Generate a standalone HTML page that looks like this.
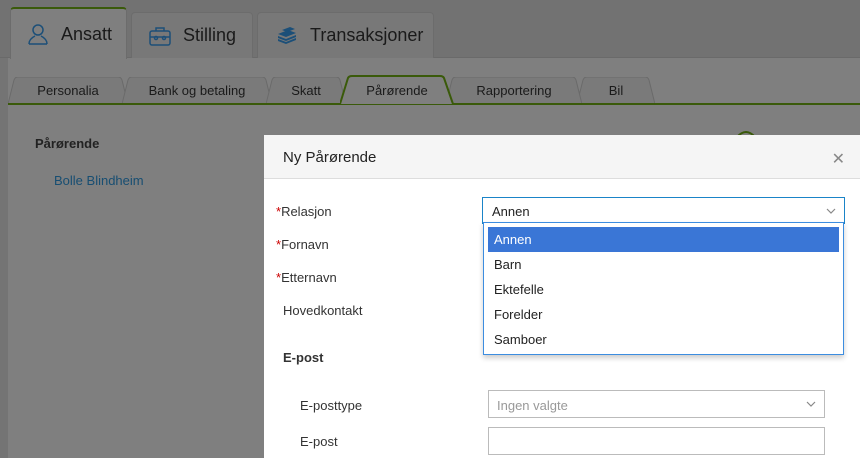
<!DOCTYPE html>
<html style="width:860px;height:458px;overflow:hidden"><head><meta charset="utf-8"><style>
*{box-sizing:border-box;margin:0;padding:0}
body{width:860px;height:458px;overflow:hidden;background:#7f7f7f;font-family:"Liberation Sans",sans-serif;position:relative;color:#222}
.top{position:absolute;left:0;top:0;width:860px;height:58px;background:#727272;border-bottom:1px solid #6a6a6a}
.lstrip{position:absolute;left:0;top:58px;width:8px;height:400px;background:#747474}
.tab{position:absolute;border:1px solid #6c6c6c;border-bottom:none;border-radius:4px 4px 0 0;background:#787878;font-size:18px;color:#1a1a1a;display:flex;align-items:center}
.tab svg{margin-right:12px}
.sub{position:absolute;top:77px;height:27px;font-size:13px;color:#1a1a1a;text-align:center;line-height:28px}
.sub svg{position:absolute;left:0;top:0}
.sub span{position:relative}
.gl{position:absolute;left:8px;top:103px;width:852px;height:2px;background:#3a5a0a}
.modal{position:absolute;left:264px;top:135px;width:600px;height:323px;background:#fff;overflow:hidden}
.mh{height:44px;background:#f5f5f5;border-bottom:1px solid #ddd;font-size:15px;padding:14px 0 0 19px;color:#222}
.lab{position:absolute;font-size:13px;color:#333}
.lab b{color:#c00;font-weight:normal}
.sel{position:absolute;border:1px solid #1a84c8;background:#fff;font-size:13px;padding:6px 9px}
.dd{position:absolute;left:219px;top:87px;width:361px;height:133px;border:1px solid #3c8de0;background:#fff;box-shadow:0 3px 5px rgba(0,0,0,.2);font-size:13px}
.dd div{height:25px;line-height:25px;padding-left:6px;margin:0 4px}
.dd .on{background:#3a76d6;color:#fff;margin-top:4px}
.inp{position:absolute;border:1px solid #bbb;background:#fff;font-size:13px;padding:7px 8px;color:#999}
.chev{position:absolute;right:8px;top:10px}
</style></head><body>
<div class="top"></div>
<div class="lstrip"></div>
<div class="tab" style="left:10px;top:7px;width:117px;height:52px;background:#7f7f7f;border-top:2px solid #3a5a0a;padding-left:16px">
<svg width="22" height="22" viewBox="0 0 22 22" fill="none" stroke="#1c4f78" stroke-width="1.5"><circle cx="11" cy="7" r="5"/><path d="M2 21c0-5 4-7 6-8M20 21c0-5-4-7-6-8M2 21h18"/></svg>Ansatt</div>
<div class="tab" style="left:131px;top:12px;width:122px;height:46px;padding-left:17px">
<svg width="22" height="20" viewBox="0 0 22 20" fill="none" stroke="#1c4f78" stroke-width="1.5"><rect x="1" y="5" width="20" height="14" rx="2"/><path d="M7 5V2h8v3M1 11h20"/><circle cx="7" cy="12" r="1.5"/><circle cx="15" cy="12" r="1.5"/></svg>Stilling</div>
<div class="tab" style="left:257px;top:12px;width:177px;height:46px;padding-left:18px">
<svg width="22" height="20" viewBox="0 0 22 20" fill="#1c4f78"><path d="M2 8l10-4 8 3-10 4z" /><path d="M2 10l8 3 10-4v2l-10 4-8-3z"/><path d="M2 13l8 3 10-4v2l-10 4-8-3z"/><path d="M6 4l8-3 5 2-8 3z"/></svg>Transaksjoner</div>

<div class="sub" style="left:8px;width:120px"><svg width="120" height="27"><path d="M0 27L6 3Q7 0 10 0H110Q113 0 114 3L120 27" fill="#7a7a7a" stroke="#6a6a6a"/></svg><span>Personalia</span></div>
<div class="sub" style="left:122px;width:150px"><svg width="150" height="27"><path d="M0 27L6 3Q7 0 10 0H140Q143 0 144 3L150 27" fill="#7a7a7a" stroke="#6a6a6a"/></svg><span>Bank og betaling</span></div>
<div class="sub" style="left:266px;width:80px"><svg width="80" height="27"><path d="M0 27L6 3Q7 0 10 0H70Q73 0 74 3L80 27" fill="#7a7a7a" stroke="#6a6a6a"/></svg><span>Skatt</span></div>
<div class="sub" style="left:577px;width:78px"><svg width="78" height="27"><path d="M0 27L6 3Q7 0 10 0H68Q71 0 72 3L78 27" fill="#7a7a7a" stroke="#6a6a6a"/></svg><span>Bil</span></div>
<div class="sub" style="left:446px;width:136px"><svg width="136" height="27"><path d="M0 27L6 3Q7 0 10 0H126Q129 0 130 3L136 27" fill="#7a7a7a" stroke="#6a6a6a"/></svg><span>Rapportering</span></div>
<div class="gl"></div>
<div class="sub" style="left:340px;width:114px;top:75px;height:30px"><svg width="114" height="30"><path d="M0 29L8 3Q9 1 12 1H100Q103 1 104 3L113 29" fill="#7f7f7f" stroke="#3a5a0a" stroke-width="2"/></svg><span style="top:2px">Pårørende</span></div>

<div style="position:absolute;left:35px;top:136px;font-size:13px;font-weight:bold;color:#222">Pårørende</div>
<div style="position:absolute;left:54px;top:173px;font-size:13px;color:#174e72">Bolle Blindheim</div>
<svg style="position:absolute;left:735px;top:129px" width="22" height="8"><path d="M2 8Q11 -2 20 8" fill="none" stroke="#3a5a0a" stroke-width="2"/></svg>

<div class="modal">
<div class="mh">Ny Pårørende<span style="position:absolute;right:19px;top:14px;color:#888;font-size:16px">✕</span></div>
<div class="lab" style="left:12px;top:69px"><b>*</b>Relasjon</div>
<div class="lab" style="left:12px;top:102px"><b>*</b>Fornavn</div>
<div class="lab" style="left:12px;top:135px"><b>*</b>Etternavn</div>
<div class="lab" style="left:19px;top:168px">Hovedkontakt</div>
<div class="lab" style="left:19px;top:215px;font-weight:bold">E-post</div>
<div class="lab" style="left:36px;top:263px">E-posttype</div>
<div class="lab" style="left:36px;top:299px">E-post</div>
<div class="sel" style="left:218px;top:62px;width:363px;height:27px">Annen<svg class="chev" width="10" height="6"><path d="M1 1l4 4 4-4" fill="none" stroke="#888" stroke-width="1.2"/></svg></div>
<div class="dd"><div class="on">Annen</div><div>Barn</div><div>Ektefelle</div><div>Forelder</div><div>Samboer</div></div>
<div class="inp" style="left:224px;top:255px;width:337px;height:28px">Ingen valgte<svg class="chev" width="10" height="6"><path d="M1 1l4 4 4-4" fill="none" stroke="#888" stroke-width="1.2"/></svg></div>
<div class="inp" style="left:224px;top:292px;width:337px;height:28px"></div>
</div>
</body></html>
